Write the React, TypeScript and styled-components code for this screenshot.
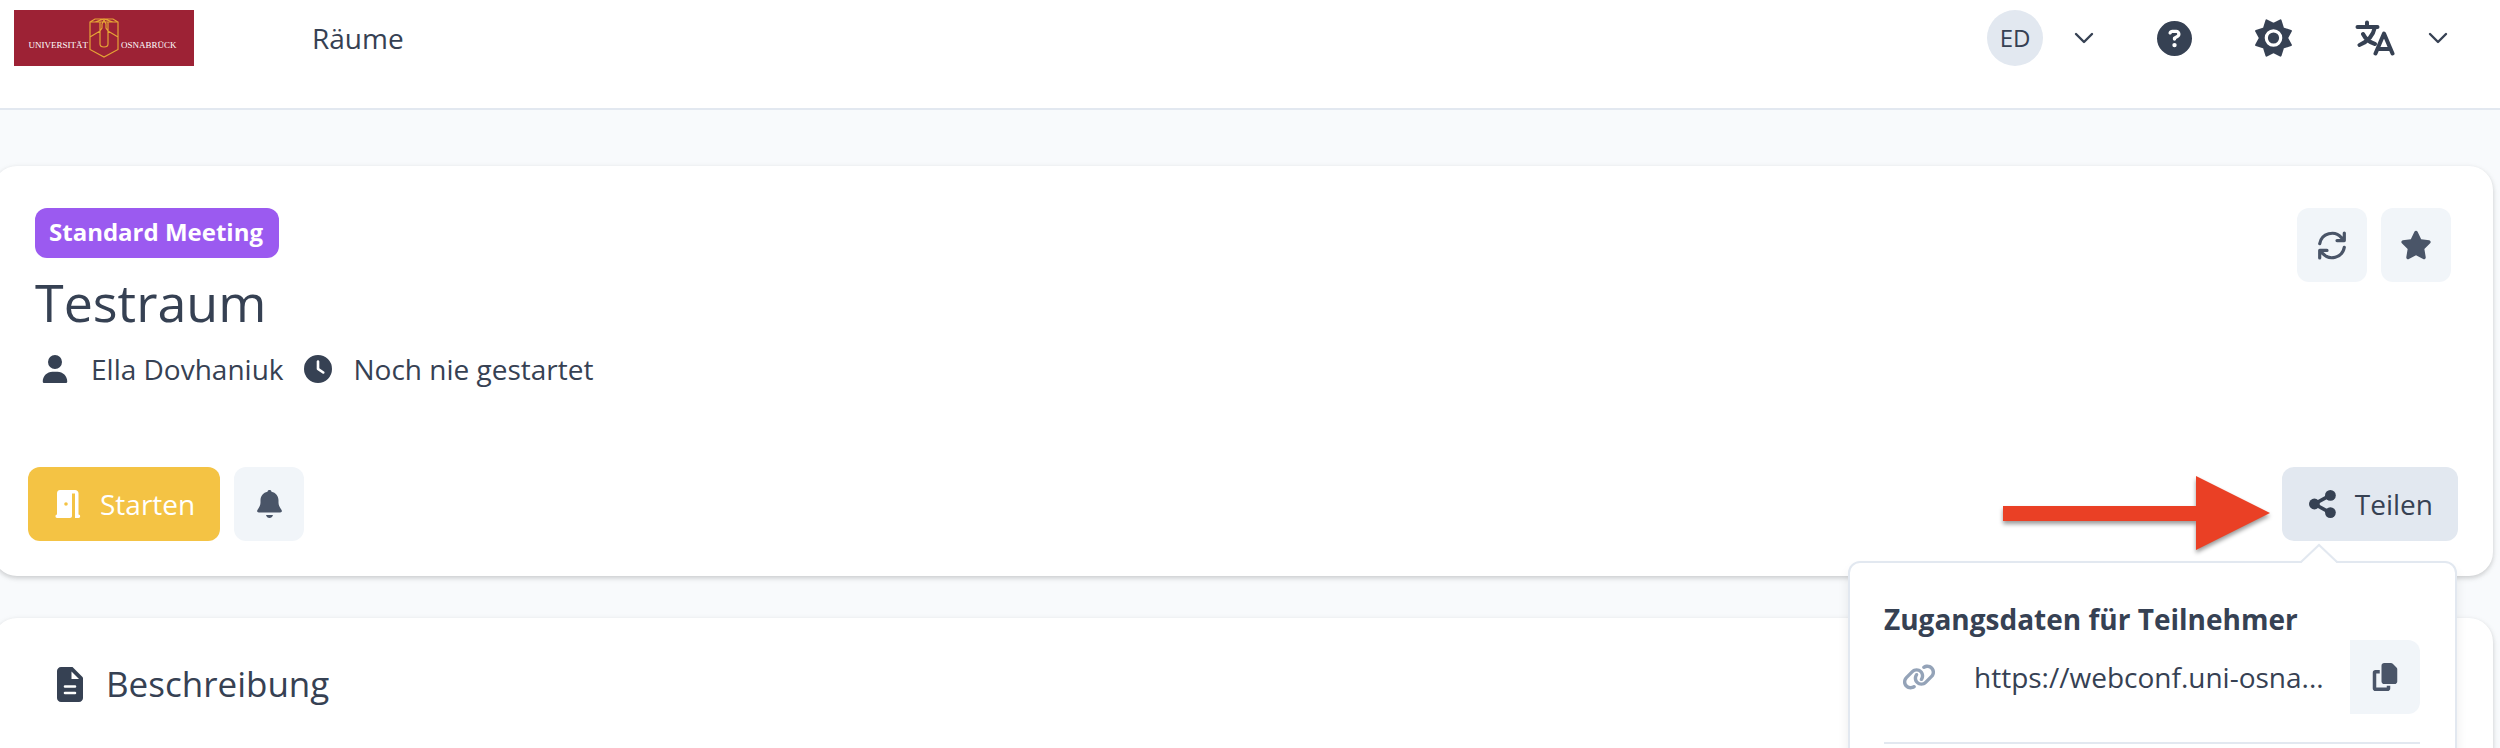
import React from "react";
import styled, { createGlobalStyle } from "styled-components";
import { FaCircleQuestion, FaClock, FaCopy, FaLink, FaStar, FaUser } from "react-icons/fa6";

const GlobalStyle = createGlobalStyle`
  *, *::before, *::after { box-sizing: border-box; }
  body {
    margin: 0;
    background: #f8fafc;
    color: #364153;
    font-family: "Open Sans", "Noto Sans", sans-serif;
    font-size: 28px;
    line-height: 42px;
  }
  h1, h2, h3, p, ul { margin: 0; padding: 0; font: inherit; }
  button { font: inherit; color: inherit; border: 0; background: none; padding: 0; cursor: pointer; }
  svg { display: block; flex: none; }
`;

const Page = styled.div`
  display: flex;
  flex-direction: column;
  min-height: 100vh;
  overflow: hidden;
`;

const TopBar = styled.header`
  display: flex;
  justify-content: space-between;
  align-items: flex-start;
  padding: 10px 52px 42px 14px;
  background: #ffffff;
  border-bottom: 2px solid #e2e8f0;
`;

const Nav = styled.nav`
  display: flex;
  align-items: center;
  gap: 118px;
`;

const NavLink = styled.a`
  color: inherit;
  text-decoration: none;
`;

const Tools = styled.div`
  display: flex;
  align-items: center;
  gap: 63px;
  height: 56px;
`;

const ToolButton = styled.button<{ $gap?: number }>`
  display: flex;
  align-items: center;
  gap: ${(p) => p.$gap ?? 0}px;
`;

const Avatar = styled.span`
  display: grid;
  place-items: center;
  width: 56px;
  height: 56px;
  border-radius: 50%;
  background: #e2e8f0;
  font-size: 24px;
`;

const Main = styled.main`
  display: flex;
  flex: 1;
  flex-direction: column;
  gap: 42px;
  margin: 56px 7px 0 -7px;
`;

const Card = styled.section<{ $fill?: boolean }>`
  flex: ${(p) => (p.$fill ? "1" : "none")};
  padding: ${(p) => (p.$fill ? "42px 42px 56px 64px" : "42px 35px 35px")};
  border-radius: ${(p) => (p.$fill ? "24px 24px 0 0" : "24px")};
  background: #ffffff;
  box-shadow: 0 2px 6px rgba(0, 0, 0, 0.1), 0 2px 4px rgba(0, 0, 0, 0.1);
`;

const CardHead = styled.div`
  display: flex;
  justify-content: space-between;
  align-items: flex-start;
  padding: 0 7px;
`;

const Badge = styled.span`
  display: inline-block;
  padding: 3px 16px 5px 14px;
  border-radius: 12px;
  background: #9b5af0;
  color: #ffffff;
  font-size: 24px;
  font-weight: 700;
`;

const RoomTitle = styled.h1`
  margin-top: 10px;
  font-size: 52px;
  line-height: 68px;
`;

const MetaList = styled.ul`
  display: flex;
  gap: 20px;
  margin-top: 12px;
  list-style: none;
`;

const MetaItem = styled.li`
  display: flex;
  align-items: center;
  gap: 22px;

  &:first-child { padding-left: 6px; }
`;

const Actions = styled.div`
  display: flex;
  gap: 14px;
`;

const ActionBar = styled.div`
  display: flex;
  justify-content: space-between;
  margin-top: 77px;
`;

const IconButton = styled.button<{ $joined?: boolean }>`
  display: grid;
  place-items: center;
  width: 70px;
  height: 74px;
  border-radius: ${(p) => (p.$joined ? "0 12px 12px 0" : "12px")};
  background: #f1f5f9;
  color: #4a5568;
`;

const LabelButton = styled.button<{ $tone: "primary" | "neutral" }>`
  display: flex;
  align-items: center;
  gap: 19px;
  height: 74px;
  padding: 0 25px 0 27px;
  border-radius: 12px;
  background: ${(p) => (p.$tone === "primary" ? "#f4c344" : "#e2e8f0")};
  color: ${(p) => (p.$tone === "primary" ? "#ffffff" : "#364153")};
  font-weight: 500;
`;

const ShareArea = styled.div`
  position: relative;
`;

const Pointer = styled.svg`
  position: absolute;
  top: 8px;
  right: calc(100% + 6px);
  filter: drop-shadow(0 3px 2px rgba(0, 0, 0, 0.4));
`;

const Popover = styled.div`
  position: absolute;
  z-index: 1;
  top: calc(100% + 20px);
  right: 1px;
  width: 609px;
  padding: 35px 35px 36px 34px;
  border: 2px solid #e2e8f0;
  border-radius: 12px;
  background: #ffffff;
  box-shadow: 0 8px 12px rgba(0, 0, 0, 0.08);
`;

const Notch = styled.svg`
  position: absolute;
  top: -20px;
  right: 116px;
`;

const PopoverTitle = styled.h3`
  font-weight: 700;
`;

const Credential = styled.div`
  display: flex;
  align-items: center;
  padding-bottom: 28px;
  border-bottom: 2px solid #e2e8f0;
`;

const CredentialIcon = styled.span`
  display: grid;
  place-items: center;
  width: 70px;
  color: #94a3b8;
`;

const CredentialLink = styled.a`
  flex: 1;
  padding: 0 20px;
  color: inherit;
  text-decoration: none;
  white-space: nowrap;
`;

const SectionTitle = styled.h2`
  display: flex;
  align-items: center;
  gap: 23px;
  font-size: 35px;
  line-height: 48px;
`;

const Logo = () => (
  <svg width="180" height="56" viewBox="0 0 180 56" role="img" aria-label="Universität Osnabrück">
    <rect width="180" height="56" fill="#9d2235" />
    <g fill="#ffffff" fontFamily="Liberation Serif, serif" fontSize="9">
      <text x="74" y="38" textAnchor="end">UNIVERSITÄT</text>
      <text x="107" y="38">OSNABRÜCK</text>
    </g>
    <path
      d="M76 12 81 9H99L104 12V39.500L90 47 76 39.500ZM76 12H104M76 27 86 21V34C86 38 94 38 94 34V21L104 27M81 12 90 9 99 12M86 21V12H94V21M88 14 90 10 92 14V18L94 21M88 14V18L86 21"
      fill="none"
      stroke="#e5a435"
      strokeWidth="1.200"
    />
  </svg>
);

const Chevron = () => (
  <svg width="20" height="14" viewBox="0 0 20 14" fill="none" stroke="currentColor" strokeWidth="2.400" strokeLinecap="round" strokeLinejoin="round" aria-hidden="true">
    <path d="M2 3 10 11 18 3" />
  </svg>
);

const SunIcon = () => (
  <svg width="37" height="38" viewBox="-18.500 -19 37 38" aria-hidden="true">
    <path
      d="M-7 -17.500 0 -14 7 -17.500 9.500 -9.500 17.300 -7 13.500 0 17.300 7 9.500 9.500 7 17.500 0 14 -7 17.500 -9.500 9.500 -17.300 7 -13.500 0 -17.300 -7 -9.500 -9.500Z"
      fill="currentColor"
      stroke="currentColor"
      strokeWidth="2.200"
      strokeLinejoin="round"
    />
    <circle r="7.200" fill="none" stroke="#ffffff" strokeWidth="3.200" />
  </svg>
);

const LanguageIcon = () => (
  <svg width="40" height="36" viewBox="0 0 40 36" fill="none" stroke="currentColor" strokeWidth="4" strokeLinecap="round" strokeLinejoin="round" aria-hidden="true">
    <path d="M2.500 7H22.500M12 2.500V7M20 7C18 16 12 22 4.500 25M8 14C10.500 19 15 22.500 20 24M20.500 33.500 29 13.500 37.500 33.500M23 29H35" />
  </svg>
);

const RefreshIcon = () => (
  <svg width="28" height="29" viewBox="0 0 28 29" fill="none" stroke="currentColor" strokeWidth="3.200" strokeLinecap="round" strokeLinejoin="round" aria-hidden="true">
    <path d="M1.700 12.700A12.500 12.500 0 0 1 23.500 6.700L26 9.500M26.300 2V9.600H19M26.300 16.300A12.500 12.500 0 0 1 4.500 22.300L2 19.500M1.700 27V19.400H9" />
  </svg>
);

const BellIcon = () => (
  <svg width="25" height="28" viewBox="0 0 25 28" fill="currentColor" aria-hidden="true">
    <path d="M12.500 0C13.600 0 14.400.7 14.500 1.700C18.700 2.500 21.500 6 21.500 10.300V12.500C21.500 15 22.500 17 24.400 19.700C25.500 21.300 24.700 22.500 23.200 22.500H1.800C.3 22.500-.5 21.300.6 19.700C2.500 17 3.500 15 3.500 12.500V10.300C3.500 6 6.300 2.500 10.500 1.700C10.600.7 11.400 0 12.500 0ZM9 25H16C15.500 27 14.200 28 12.500 28C10.800 28 9.500 27 9 25Z" />
  </svg>
);

const ShareIcon = () => (
  <svg width="27" height="28" viewBox="0 0 27 28" fill="currentColor" aria-hidden="true">
    <path d="M21 5.400 5.400 14 21 22.600" fill="none" stroke="currentColor" strokeWidth="3.600" />
    <circle cx="5.400" cy="14" r="5.400" />
    <circle cx="21.400" cy="5.400" r="5.400" />
    <circle cx="21.400" cy="22.600" r="5.400" />
  </svg>
);

const DoorIcon = () => (
  <svg width="26" height="30" viewBox="0 0 26 30" fill="currentColor" aria-hidden="true">
    <path
      fillRule="evenodd"
      d="M5 1H20C22 1 23.500 2.500 23.500 4.500V25.500C25.700 25.500 25.700 29 23.500 29H20V4.500H17V27C17 28.200 16.200 29 15 29H2C0 29 0 25.500 2 25.500V4.500C2 2.500 3 1 5 1ZM11 13.200A1.800 1.800 0 1 0 11 16.800A1.800 1.800 0 1 0 11 13.200Z"
    />
  </svg>
);

const FileIcon = () => (
  <svg width="26" height="35" viewBox="0 0 26 35" aria-hidden="true">
    <path d="M4 0H15.500L26 10.500V31C26 33.200 24.200 35 22 35H4C1.800 35 0 33.200 0 31V4C0 1.800 1.800 0 4 0Z" fill="currentColor" />
    <path d="M14.500 4.500V12H22Z" fill="#ffffff" />
    <path d="M8 19.500H18M8 26H18" stroke="#ffffff" strokeWidth="2.600" strokeLinecap="round" />
  </svg>
);

export default function App() {
  return (
    <Page>
      <GlobalStyle />
      <TopBar>
        <Nav>
          <Logo />
          <NavLink href="#rooms">Räume</NavLink>
        </Nav>
        <Tools>
          <ToolButton $gap={31} aria-label="Benutzermenü">
            <Avatar>ED</Avatar>
            <Chevron />
          </ToolButton>
          <ToolButton aria-label="Hilfe"><FaCircleQuestion size={35} /></ToolButton>
          <ToolButton aria-label="Farbschema"><SunIcon /></ToolButton>
          <ToolButton $gap={33} aria-label="Sprache">
            <LanguageIcon />
            <Chevron />
          </ToolButton>
        </Tools>
      </TopBar>

      <Main>
        <Card>
          <CardHead>
            <div>
              <Badge>Standard Meeting</Badge>
              <RoomTitle>Testraum</RoomTitle>
              <MetaList>
                <MetaItem><FaUser size={28} />Ella Dovhaniuk</MetaItem>
                <MetaItem><FaClock size={28} />Noch nie gestartet</MetaItem>
              </MetaList>
            </div>
            <Actions>
              <IconButton aria-label="Neu laden"><RefreshIcon /></IconButton>
              <IconButton aria-label="Favorit"><FaStar size={32} /></IconButton>
            </Actions>
          </CardHead>

          <ActionBar>
            <Actions>
              <LabelButton $tone="primary"><DoorIcon />Starten</LabelButton>
              <IconButton aria-label="Benachrichtigung"><BellIcon /></IconButton>
            </Actions>
            <ShareArea>
              <LabelButton $tone="neutral"><ShareIcon />Teilen</LabelButton>
              <Pointer width="274" height="80" viewBox="0 0 274 80" aria-hidden="true">
                <path d="M1 31H194V1L268 38 194 75V46H1Z" fill="#ea4025" />
              </Pointer>
              <Popover>
                <Notch width="40" height="22" viewBox="0 0 40 22" aria-hidden="true">
                  <path d="M2 22V20L20 2 38 20V22Z" fill="#ffffff" />
                  <path d="M1 19H2L20 2 38 19H39" fill="none" stroke="#e2e8f0" strokeWidth="2" />
                </Notch>
                <PopoverTitle>Zugangsdaten für Teilnehmer</PopoverTitle>
                <Credential>
                  <CredentialIcon><FaLink size={34} /></CredentialIcon>
                  <CredentialLink href="#access">https://webconf.uni-osna...</CredentialLink>
                  <IconButton $joined aria-label="Kopieren"><FaCopy size={28} /></IconButton>
                </Credential>
              </Popover>
            </ShareArea>
          </ActionBar>
        </Card>

        <Card $fill>
          <SectionTitle><FileIcon />Beschreibung</SectionTitle>
        </Card>
      </Main>
    </Page>
  );
}
